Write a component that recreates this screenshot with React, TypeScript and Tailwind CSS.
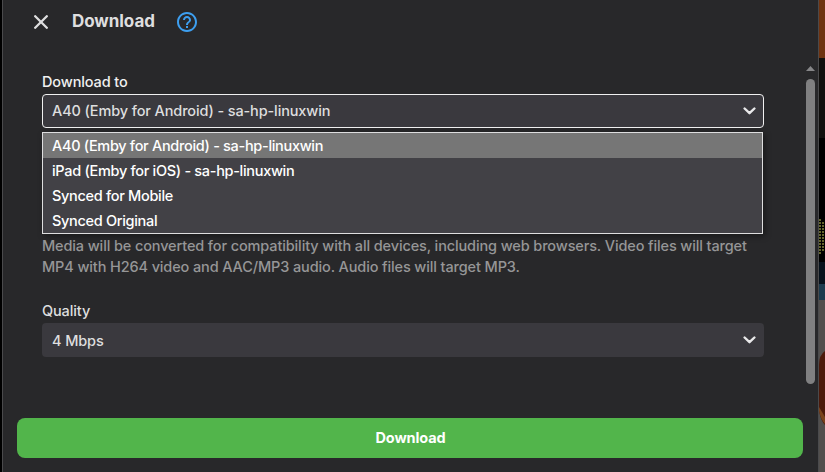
import React from "react";

const targets = [
  "A40 (Emby for Android) - sa-hp-linuxwin",
  "iPad (Emby for iOS) - sa-hp-linuxwin",
  "Synced for Mobile",
  "Synced Original",
];

function Chevron() {
  return (
    <svg className="h-[8px] w-[13px]" viewBox="0 0 13 8" fill="none" stroke="#e9e9ea" strokeWidth="2.4" strokeLinecap="round" strokeLinejoin="round">
      <path d="M1.600 1.500 6.500 6.200 11.400 1.500" />
    </svg>
  );
}

function Poster() {
  return (
    <svg className="h-[472px] w-[6px] shrink-0" viewBox="0 0 6 472">
      <defs>
        <pattern id="dots" width="3" height="3" patternUnits="userSpaceOnUse">
          <rect width="2" height="2" fill="#62632b" />
        </pattern>
      </defs>
      <rect width="6" height="472" fill="#000" />
      <rect width="6" height="58" fill="#6f3310" />
      <rect y="58" width="6" height="80" fill="#11100e" />
      <rect y="221" width="6" height="30" fill="url(#dots)" />
      <rect y="218" width="3" height="37" fill="url(#dots)" />
      <rect y="262" width="6" height="22" fill="#07121c" />
      <rect y="284" width="6" height="16" fill="#1c3b4e" />
      <rect y="300" width="6" height="172" fill="#524f4d" />
      <path d="M6 351Q0 355 0 365V411Q2 421 6 425Z" fill="#4c1a0b" />
      <path d="M0 411Q2 420 6 424V417L0 407Z" fill="#7a431c" />
    </svg>
  );
}

export default function App() {
  return (
    <div className="flex h-[472px] w-[825px] overflow-hidden bg-black pl-[2px] font-['Inter',sans-serif] text-[14.5px] tracking-[-0.125px] text-[#dededf]">
      <section className="flex w-[817px] shrink-0 flex-col border-x border-[#4a4a4c] bg-[#28282a]">
        <header className="flex h-11 shrink-0 items-center pl-[31px]">
          <svg className="h-[14px] w-[14px]" viewBox="0 0 14 14" stroke="#dededf" strokeWidth="2.3" strokeLinecap="round">
            <path d="M1.200 1.200 12.800 12.800M12.800 1.200 1.200 12.800" />
          </svg>
          <h1 className="ml-6 w-[83px] pb-[2px] text-[17px] leading-6 font-bold tracking-[-0.05px] whitespace-nowrap">Download</h1>
          <svg className="ml-[19.500px] h-6 w-6" viewBox="0 0 24 24" fill="#3d9ff0">
            <path d="M11 18h2v-2h-2v2zm1-16C6.480 2 2 6.480 2 12s4.480 10 10 10 10-4.480 10-10S17.520 2 12 2zm0 18c-4.410 0-8-3.590-8-8s3.590-8 8-8 8 3.590 8 8-3.590 8-8 8zm0-14c-2.210 0-4 1.790-4 4h2c0-1.100.9-2 2-2s2 .9 2 2c0 2-3 1.750-3 5h2c0-2.250 3-2.500 3-5 0-2.210-1.790-4-4-4z" />
          </svg>
        </header>
        <div className="flex h-[358px] shrink-0">
          <main className="ml-[39px] w-[722px] shrink-0 pt-7">
            <label className="block h-[22px] leading-5 font-medium text-[#f0f0f0]">Download to</label>
            <div className="relative">
              <div className="flex h-[34px] items-center justify-between rounded border border-[#f0f0f0] bg-[#3a393e] pr-[7px] pl-[9px] font-medium">
                <span>{targets[0]}</span>
                <Chevron />
              </div>
              <ul className="absolute top-[38px] left-0 h-[102px] w-[721px] border border-[#dededf] bg-[#424146] font-medium tracking-[-0.31px] text-white shadow-[2px_2px_6px_rgba(0,0,0,0.4)]">
                {targets.map((target, index) => (
                  <li key={target} className={`h-[25px] pl-[9px] leading-[26px] ${index === 0 ? "bg-[#767676]" : ""}`}>
                    {target}
                  </li>
                ))}
              </ul>
            </div>
            <p className="mt-[107px] leading-[21px] font-medium whitespace-nowrap text-[#969697]">
              Media will be converted for compatibility with all devices, including web browsers. Video files will target
              <br />
              MP4 with H264 video and AAC/MP3 audio. Audio files will target MP3.
            </p>
            <label className="mt-6 block h-[22px] leading-5 font-medium">Quality</label>
            <div className="flex h-[34px] items-center justify-between rounded bg-[#3a393e] pr-2 pl-[10px] font-medium">
              <span className="pt-[2px]">4 Mbps</span>
              <Chevron />
            </div>
          </main>
          <div className="ml-[42px] flex w-[9px] flex-col pt-[22px]">
            <svg className="h-[5px] w-[9px]" viewBox="0 0 9 5" fill="#868688">
              <path d="M4.500 0 9 5H0Z" />
            </svg>
            <div className="mt-2 h-[305px] rounded-full bg-[#808081]" />
          </div>
        </div>
        <footer className="px-[14px] pt-4">
          <button className="block h-10 w-[786px] rounded-lg bg-[#52b54b] pl-px font-bold text-white">Download</button>
        </footer>
      </section>
      <Poster />
    </div>
  );
}
